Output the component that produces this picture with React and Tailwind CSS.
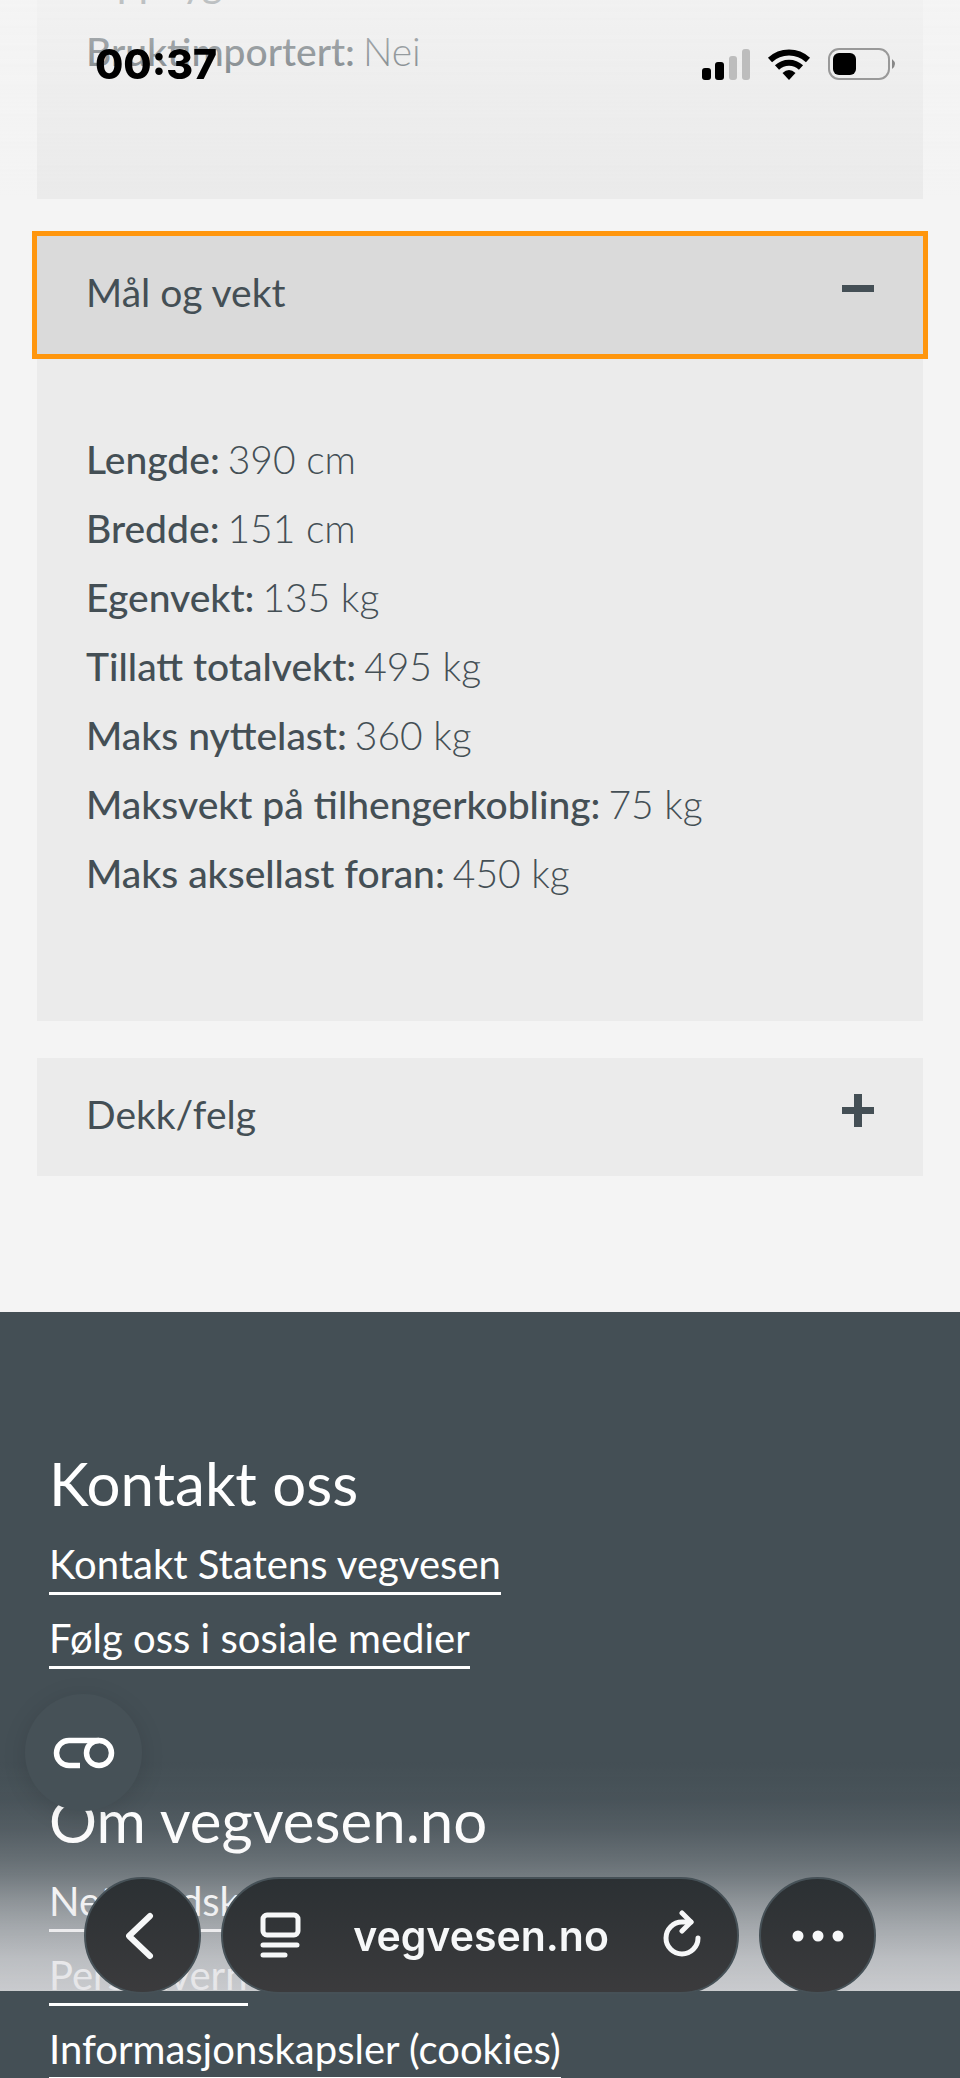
import { useState } from 'react';

const measurements = [
  { label: 'Lengde', value: '390 cm' },
  { label: 'Bredde', value: '151 cm' },
  { label: 'Egenvekt', value: '135 kg' },
  { label: 'Tillatt totalvekt', value: '495 kg' },
  { label: 'Maks nyttelast', value: '360 kg' },
  { label: 'Maksvekt på tilhengerkobling', value: '75 kg' },
  { label: 'Maks aksellast foran', value: '450 kg' },
];

const footerSections = [
  {
    title: 'Kontakt oss',
    links: ['Kontakt Statens vegvesen', 'Følg oss i sosiale medier'],
  },
  {
    title: 'Om vegvesen.no',
    links: ['Nettstedskart', 'Personvern', 'Informasjonskapsler (cookies)'],
  },
];

function DataRow({ label, value }) {
  return (
    <div className="flex gap-2 leading-[69px]">
      <dt className="font-medium">{label}:</dt>
      <dd className="font-light">{value}</dd>
    </div>
  );
}

function Accordion({ title, defaultOpen = false, focused = false, children }) {
  const [open, setOpen] = useState(defaultOpen);

  return (
    <section className="bg-[#ebebeb]">
      <h2>
        <button
          type="button"
          aria-expanded={open}
          onClick={() => setOpen(!open)}
          className={`flex w-full items-center justify-between pt-[26px] pb-8 pl-[49px] pr-12 text-left leading-[60px] outline-[#ff960d] ${
            open ? 'bg-[#dadada]' : 'bg-[#ebebeb]'
          } ${focused ? 'outline-5' : ''}`}
        >
          {title}
          <svg width="34" height="34" viewBox="0 0 34 34" fill="#444f55" className="overflow-visible" aria-hidden="true">
            <rect x="1" y="10" width="32" height="7" />
            {!open && <rect x="13" y="-3" width="8" height="33" />}
          </svg>
        </button>
      </h2>
      {open && children && <div className="px-[49px] pt-[71px] pb-[113px]">{children}</div>}
    </section>
  );
}

function StatusBar() {
  return (
    <div className="fixed inset-x-0 top-0 z-20 flex items-center justify-between pt-[39px] pl-[95px] pr-[65px] font-['Inter',sans-serif] text-black">
      <span className="text-[41px] leading-[50px] font-extrabold">00:37</span>
      <svg width="194" height="34" viewBox="0 0 194 34" aria-hidden="true">
        <rect x="1" y="21" width="9" height="12" rx="3" />
        <rect x="14" y="15" width="9" height="18" rx="3" />
        <rect x="28" y="9" width="8" height="24" rx="3" fill="#bdbdbd" />
        <rect x="41" y="2" width="8" height="31" rx="3" fill="#bdbdbd" />
        <g fill="none" stroke="#000" strokeWidth="6">
          <path d="M69 13 A28 28 0 0 1 107 13" />
          <path d="M76 20.500 A17.500 17.500 0 0 1 100 20.500" />
        </g>
        <path d="M81.500 26 Q88 20 94.500 26 L88 33 Z" />
        <rect x="128" y="2" width="60" height="30" rx="10" fill="none" stroke="#999" strokeWidth="2" />
        <rect x="132" y="6" width="23" height="22" rx="6" />
        <path d="M191 12 Q197 17 191 22 Z" fill="#888" />
      </svg>
    </div>
  );
}

function BrowserBar() {
  const glass =
    'flex h-[117px] items-center rounded-full border-2 border-[#465157] bg-linear-to-b from-[#2b3033] to-[#3b3b3d] text-[#f6f7f8]';

  return (
    <nav className="fixed inset-x-0 bottom-[84px] z-20 flex gap-5 px-[84px] font-['Inter',sans-serif]">
      <button type="button" aria-label="Tilbake" className={`w-[117px] justify-center ${glass}`}>
        <svg width="34" height="50" viewBox="0 0 34 50" fill="none" stroke="currentColor" strokeWidth="6" strokeLinecap="round" strokeLinejoin="round">
          <path d="M24 5 L3 25 L24 45" />
        </svg>
      </button>
      <div className={`flex-1 justify-between px-9 ${glass}`}>
        <button type="button" aria-label="Sidemeny">
          <svg width="42" height="48" viewBox="0 0 42 48" fill="none" stroke="currentColor" strokeWidth="5" strokeLinecap="round">
            <rect x="4" y="3" width="35" height="20" rx="4" />
            <path d="M4 33 H38 M4 43 H26" />
          </svg>
        </button>
        <button type="button" className="text-[41px] leading-[56px] font-semibold">
          vegvesen.no
        </button>
        <button type="button" aria-label="Last inn på nytt">
          <svg width="40" height="52" viewBox="0 0 40 52" fill="none" stroke="currentColor" strokeWidth="5" strokeLinecap="round" strokeLinejoin="round">
            <path d="M37 28 A16 16 0 1 1 21 12 H30" />
            <path d="M21 3 L30 12 L21 21" />
          </svg>
        </button>
      </div>
      <button type="button" aria-label="Mer" className={`w-[117px] justify-center ${glass}`}>
        <svg width="52" height="12" viewBox="0 0 52 12" fill="currentColor">
          <circle cx="6" cy="6" r="5.500" />
          <circle cx="26" cy="6" r="5.500" />
          <circle cx="46" cy="6" r="5.500" />
        </svg>
      </button>
    </nav>
  );
}

export default function App() {
  return (
    <div className="h-screen overflow-hidden bg-[#f4f4f4] font-['Lato',sans-serif] text-[#444f55]">
      <main className="-mt-[52px] px-[37px] pb-[136px] text-[39px]">
        <dl className="bg-[#ebebeb] px-[49px] pb-[113px]">
          <DataRow label="Oppbygd" value="Nei" />
          <DataRow label="Bruktimportert" value="Nei" />
        </dl>
        <div className="mt-[37px] space-y-[37px]">
          <Accordion title="Mål og vekt" defaultOpen focused>
            <dl>
              {measurements.map((row) => (
                <DataRow key={row.label} {...row} />
              ))}
            </dl>
          </Accordion>
          <Accordion title="Dekk/felg" />
        </div>
      </main>

      <footer className="space-y-[111px] bg-[#444f55] px-[49px] pt-[131px] pb-24 text-[40px] text-white">
        {footerSections.map((section) => (
          <section key={section.title}>
            <h2 className="text-[60px] leading-[80px]">{section.title}</h2>
            <ul className="mt-[13px] space-y-[15px]">
              {section.links.map((link) => (
                <li key={link} className="flex">
                  <a href="#" className="border-b-3 border-white leading-[56px]">
                    {link}
                  </a>
                </li>
              ))}
            </ul>
          </section>
        ))}
      </footer>

      {/* Fades behind the status bar and the browser bar */}
      <div className="pointer-events-none fixed inset-x-0 top-0 z-10 h-[198px] bg-linear-to-b from-[#f4f4f4]/70 via-[#f4f4f4]/35 via-40% to-transparent" />
      <div className="pointer-events-none fixed inset-x-0 bottom-[87px] z-10 h-[231px] bg-[linear-gradient(to_bottom,rgb(225_225_228/0)_0%,rgb(225_225_228/0.03)_17%,rgb(225_225_228/0.1)_30%,rgb(225_225_228/0.22)_43%,rgb(225_225_228/0.3)_50%,rgb(225_225_228/0.47)_61%,rgb(225_225_228/0.61)_72%,rgb(225_225_228/0.76)_86%,rgb(225_225_228/0.85)_100%)]" />

      <button
        type="button"
        aria-label="Verktøy"
        className="fixed bottom-[267px] left-[25px] z-20 flex size-[117px] items-center justify-center rounded-full bg-[#465157] text-white shadow-[0_4px_24px_rgb(0_0_0/0.12)]"
      >
        <svg width="62" height="32" viewBox="0 0 62 32" fill="none" stroke="currentColor" strokeWidth="5.500">
          <path d="M27 28.500 H16 A12.500 12.500 0 0 1 16 3.500 H46" />
          <circle cx="46" cy="16" r="12.500" />
        </svg>
      </button>

      <StatusBar />
      <BrowserBar />
    </div>
  );
}
